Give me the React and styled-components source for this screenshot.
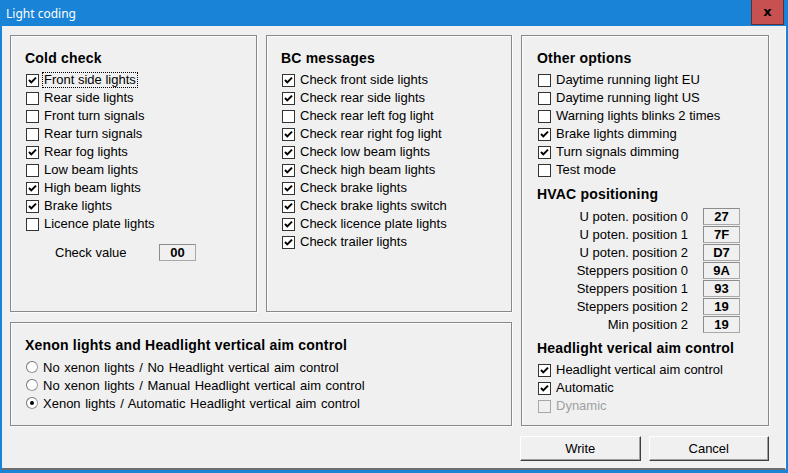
import styled, { createGlobalStyle } from 'styled-components';

const Global = createGlobalStyle`
  html, body {
    margin: 0;
    padding: 0;
    background: #1883d7;
  }
`;

const Window = styled.div`
  width: 788px;
  height: 473px;
  box-sizing: border-box;
  background: #1883d7;
  display: flex;
  flex-direction: column;
  padding: 0 2px 3px 2px;
  font-family: "Liberation Sans", Arial, sans-serif;
  color: #000;
  overflow: hidden;
`;

const TitleBar = styled.div`
  height: 26px;
  display: flex;
  align-items: flex-start;
  justify-content: space-between;
`;

const Title = styled.span`
  font-family: "Noto Sans", "Open Sans", sans-serif;
  font-size: 12px;
  color: #fff;
  padding: 5px 0 0 4px;
`;

const CloseButton = styled.div`
  width: 33px;
  height: 25px;
  box-sizing: border-box;
  margin-right: 2px;
  background: #c75050;
  border: 1px solid #5e3030;
  border-top: none;
  display: flex;
  align-items: center;
  justify-content: center;
  font-family: "DejaVu Sans", sans-serif;
  font-weight: bold;
  font-size: 13px;
  line-height: 1;
  padding-bottom: 2px;
`;

const Client = styled.div`
  flex: 1;
  background: #f0f0f0;
  border-right: 1px solid #fcfcfc;
  border-bottom: 2px solid #6e6e6e;
  padding: 9px 0 0 8px;
  display: grid;
  grid-template-columns: 247px 246px 248px;
  grid-template-rows: 277px 104px 25px;
  column-gap: 9px;
  row-gap: 10px;
  align-content: start;
`;

const Group = styled.div`
  box-sizing: border-box;
  border: 1px solid #888;
  box-shadow: inset 1px 1px 0 #fcfcfc, 1px 1px 0 #fcfcfc;
  padding: ${(p) => p.$pad || '13px 0 0 15px'};
  grid-column: ${(p) => p.$col};
  grid-row: ${(p) => p.$row};
  display: flex;
  flex-direction: column;
`;

const Heading = styled.div`
  font-weight: bold;
  font-size: 14px;
  letter-spacing: 0.2px;
  line-height: 18px;
  margin: ${(p) => p.$m || '0 0 4px -1px'};
`;

const Row = styled.div`
  display: flex;
  align-items: center;
  height: 18px;
  font-size: 13px;
  word-spacing: ${(p) => p.$wordSpacing || '0'};
  color: ${(p) => (p.$disabled ? '#a0a0a0' : '#000')};
  white-space: nowrap;
`;

const Box = styled.span`
  width: 13px;
  height: 13px;
  box-sizing: border-box;
  border: 1px solid ${(p) => (p.$disabled ? '#a6a6a6' : '#333')};
  background: ${(p) => (p.$disabled ? '#f0f0f0' : '#fff')};
  margin-right: 3px;
  display: flex;
  align-items: center;
  justify-content: center;
  flex-shrink: 0;
`;

const Label = styled.span`
  padding: 0 1px;
  border: 1px dotted ${(p) => (p.$focus ? '#000' : 'transparent')};
  line-height: 14px;
`;

const RadioDot = styled.span`
  width: 12px;
  height: 12px;
  box-sizing: border-box;
  border-radius: 50%;
  border: 1px solid #999;
  border-top-color: #777;
  border-left-color: #777;
  background: #fff;
  margin-right: 5px;
  display: flex;
  align-items: center;
  justify-content: center;
  &::after {
    content: '';
    width: 4px;
    height: 4px;
    border-radius: 50%;
    background: ${(p) => (p.$on ? '#000' : 'transparent')};
  }
`;

const ValueRow = styled.div`
  display: grid;
  grid-template-columns: ${(p) => p.$cols};
  column-gap: ${(p) => p.$gap || '15px'};
  align-items: center;
  height: 18px;
  font-size: 13px;
  white-space: nowrap;
`;

const ValueLabel = styled.span`
  text-align: ${(p) => p.$align || 'right'};
`;

const ValueBox = styled.span`
  height: 17px;
  box-sizing: border-box;
  border: 1px solid #8c8c8c;
  border-right-color: #a8a8a8;
  border-bottom-color: #a8a8a8;
  font-weight: bold;
  font-size: 13px;
  text-align: center;
  line-height: 15px;
`;

const CheckValue = styled.div`
  margin: 10px 0 0 29px;
`;

const Buttons = styled.div`
  grid-column: 3;
  grid-row: 3;
  display: flex;
  gap: 8px;
  margin-left: -1px;
`;

const Button = styled.div`
  width: 121px;
  height: 25px;
  box-sizing: border-box;
  background: #f0f0f0;
  border: 1px solid;
  border-color: #fff #404040 #404040 #fff;
  box-shadow: inset -1px -1px 0 #a0a0a0;
  display: flex;
  align-items: center;
  justify-content: center;
  font-size: 13px;
`;

function Tick() {
  return (
    <svg width="9" height="9" viewBox="0 0 9 9">
      <path d="M1 4 L3.3 6.4 L8 1.6" fill="none" stroke="#000" strokeWidth="2" />
    </svg>
  );
}

function Check({ on, focus, disabled, children }) {
  return (
    <Row $disabled={disabled}>
      <Box $disabled={disabled}>{on && <Tick />}</Box>
      <Label $focus={focus}>{children}</Label>
    </Row>
  );
}

function Radio({ on, children }) {
  return (
    <Row $wordSpacing="1px">
      <RadioDot $on={on} />
      <span>{children}</span>
    </Row>
  );
}

const coldCheck = [
  ['Front side lights', true],
  ['Rear side lights', false],
  ['Front turn signals', false],
  ['Rear turn signals', false],
  ['Rear fog lights', true],
  ['Low beam lights', false],
  ['High beam lights', true],
  ['Brake lights', true],
  ['Licence plate lights', false],
];

const bcMessages = [
  ['Check front side lights', true],
  ['Check rear side lights', true],
  ['Check rear left fog light', false],
  ['Check rear right fog light', true],
  ['Check low beam lights', true],
  ['Check high beam lights', true],
  ['Check brake lights', true],
  ['Check brake lights switch', true],
  ['Check licence plate lights', true],
  ['Check trailer lights', true],
];

const otherOptions = [
  ['Daytime running light EU', false],
  ['Daytime running light US', false],
  ['Warning lights blinks 2 times', false],
  ['Brake lights dimming', true],
  ['Turn signals dimming', true],
  ['Test mode', false],
];

const hvac = [
  ['U poten. position 0', '27'],
  ['U poten. position 1', '7F'],
  ['U poten. position 2', 'D7'],
  ['Steppers position 0', '9A'],
  ['Steppers position 1', '93'],
  ['Steppers position 2', '19'],
  ['Min position 2', '19'],
];

export default function App() {
  return (
    <Window>
      <Global />
      <TitleBar>
        <Title>Light coding</Title>
        <CloseButton>x</CloseButton>
      </TitleBar>
      <Client>
        <Group $col="1" $row="1">
          <Heading>Cold check</Heading>
          {coldCheck.map(([text, on], i) => (
            <Check key={text} on={on} focus={i === 0}>{text}</Check>
          ))}
          <CheckValue>
            <ValueRow $cols="104px 37px" $gap="0">
              <ValueLabel $align="left">Check value</ValueLabel>
              <ValueBox>00</ValueBox>
            </ValueRow>
          </CheckValue>
        </Group>

        <Group $col="2" $row="1">
          <Heading>BC messages</Heading>
          {bcMessages.map(([text, on]) => (
            <Check key={text} on={on}>{text}</Check>
          ))}
        </Group>

        <Group $col="3" $row="1 / span 2" $pad="13px 0 0 16px">
          <Heading>Other options</Heading>
          {otherOptions.map(([text, on]) => (
            <Check key={text} on={on}>{text}</Check>
          ))}
          <Heading $m="6px 0 4px -1px">HVAC positioning</Heading>
          {hvac.map(([text, value]) => (
            <ValueRow key={text} $cols="150px 37px">
              <ValueLabel>{text}</ValueLabel>
              <ValueBox>{value}</ValueBox>
            </ValueRow>
          ))}
          <Heading $m="6px 0 4px -1px">Headlight verical aim control</Heading>
          <Check on>Headlight vertical aim control</Check>
          <Check on>Automatic</Check>
          <Check disabled>Dynamic</Check>
        </Group>

        <Group $col="1 / span 2" $row="2">
          <Heading>Xenon lights and Headlight vertical aim control</Heading>
          <Radio>No xenon lights / No Headlight vertical aim control</Radio>
          <Radio>No xenon lights / Manual Headlight vertical aim control</Radio>
          <Radio on>Xenon lights / Automatic Headlight vertical aim control</Radio>
        </Group>

        <Buttons>
          <Button>Write</Button>
          <Button>Cancel</Button>
        </Buttons>
      </Client>
    </Window>
  );
}
